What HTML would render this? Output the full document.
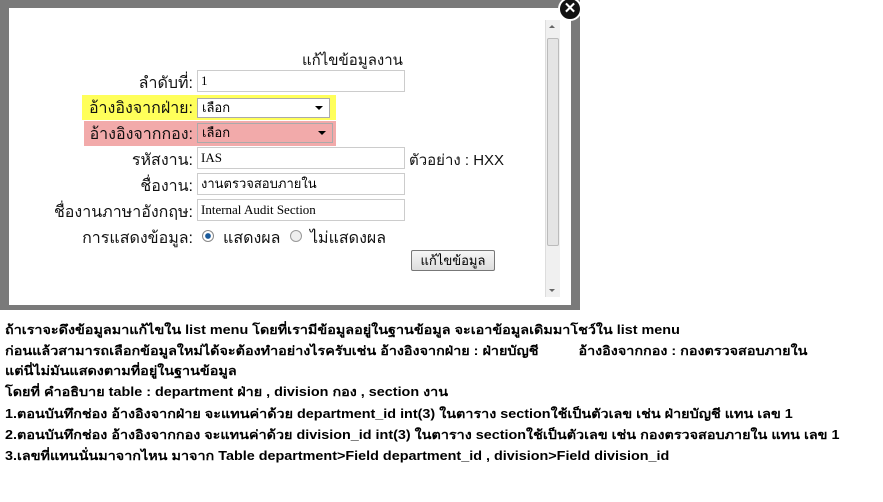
<!DOCTYPE html>
<html><head><meta charset="utf-8"><style>
body{margin:0;width:883px;height:502px;background:#fff;position:relative;overflow:hidden;font-family:"Liberation Sans",sans-serif;}
.ov{position:absolute;left:0;top:0;width:580px;height:310px;background:#7a7a7a;}
.box{position:absolute;left:9px;top:8px;width:562px;height:297px;background:#fff;}
.sb{position:absolute;left:545px;top:20px;width:14px;height:277px;background:#f0f0f0;border-left:1px solid #ddd;}
.thumb{position:absolute;left:1px;top:18px;width:12px;height:208px;background:#e4e4e4;border:1px solid #bbb;border-radius:2px;box-sizing:border-box;}
.a{position:absolute;font-size:15px;color:#111;white-space:nowrap;}
.lbl{position:absolute;right:690px;font-size:16px;color:#111;white-space:nowrap;}
.in{position:absolute;left:197px;width:208px;height:22px;border:1px solid #ccc;box-sizing:border-box;font-family:"Liberation Serif",serif;font-size:13px;padding:2px 3px;line-height:16px;background:#fff;}
.sel{position:absolute;left:197px;height:20px;border:1px solid #aaa;box-sizing:border-box;font-size:13px;padding:0 4px;line-height:17px;}
.arr{position:absolute;right:6px;top:7px;border-left:4px solid transparent;border-right:4px solid transparent;border-top:4px solid #000;}
.t{position:absolute;left:5px;font-size:12.5px;font-weight:bold;color:#000;white-space:nowrap;transform:scaleX(1.15);transform-origin:0 0;}
</style></head><body>
<div class="ov"></div>
<div class="box"></div>
<div class="sb"><div style="position:absolute;left:3px;top:5px;border-left:3px solid transparent;border-right:3px solid transparent;border-bottom:3px solid #666"></div><div class="thumb"></div><div style="position:absolute;left:3px;bottom:5px;border-left:3px solid transparent;border-right:3px solid transparent;border-top:3px solid #666"></div></div>
<div style="position:absolute;left:558px;top:-3px;width:20px;height:20px;border-radius:50%;background:#111;border:2px solid #fff;color:#fff;font-weight:bold;font-size:15px;text-align:center;line-height:19px;">✕</div>
<div class="a" style="left:302px;top:48px">แก้ไขข้อมูลงาน</div>
<div class="lbl" style="top:71px">ลำดับที่:</div>
<div class="in" style="top:70px">1</div>
<div style="position:absolute;left:82px;top:95px;width:254px;height:25px;background:#ffff5a"></div>
<div class="lbl" style="top:96px">อ้างอิงจากฝ่าย:</div>
<div class="sel" style="top:98px;width:133px;background:#fff">เลือก<span class="arr"></span></div>
<div style="position:absolute;left:84px;top:121px;width:252px;height:25px;background:#f2aaaa"></div>
<div class="lbl" style="top:122px">อ้างอิงจากกอง:</div>
<div class="sel" style="top:123px;width:136px;background:#f2aaaa">เลือก<span class="arr"></span></div>
<div class="lbl" style="top:148px">รหัสงาน:</div>
<div class="in" style="top:147px">IAS</div>
<div class="a" style="left:409px;top:148px">ตัวอย่าง : HXX</div>
<div class="lbl" style="top:174px">ชื่องาน:</div>
<div class="in" style="top:173px">งานตรวจสอบภายใน</div>
<div class="lbl" style="top:200px">ชื่องานภาษาอังกฤษ:</div>
<div class="in" style="top:199px">Internal Audit Section</div>
<div class="lbl" style="top:226px">การแสดงข้อมูล:</div>
<div style="position:absolute;left:202px;top:230px;width:10px;height:10px;border-radius:50%;border:1px solid #888;background:radial-gradient(#1a5a9a 35%,#fff 45%)"></div>
<div class="a" style="left:223px;top:226px;font-size:16px">แสดงผล</div>
<div style="position:absolute;left:290px;top:230px;width:10px;height:10px;border-radius:50%;border:1px solid #999;background:#eee"></div>
<div class="a" style="left:310px;top:226px;font-size:16px">ไม่แสดงผล</div>
<div style="position:absolute;left:411px;top:250px;width:84px;height:21px;border:1px solid #777;border-radius:2px;background:linear-gradient(#f6f6f6,#ddd);box-sizing:border-box;font-size:13px;text-align:center;line-height:19px">แก้ไขข้อมูล</div>
<div class="t" style="top:320px">ถ้าเราจะดึงข้อมูลมาแก้ไขใน list menu โดยที่เรามีข้อมูลอยู่ในฐานข้อมูล จะเอาข้อมูลเดิมมาโชว์ใน list menu</div>
<div class="t" style="top:341px">ก่อนแล้วสามารถเลือกข้อมูลใหม่ได้จะต้องทำอย่างไรครับเช่น อ้างอิงจากฝ่าย : ฝ่ายบัญชี&nbsp;&nbsp;&nbsp;&nbsp;&nbsp;&nbsp;&nbsp;&nbsp;&nbsp;&nbsp;อ้างอิงจากกอง : กองตรวจสอบภายใน</div>
<div class="t" style="top:361px">แต่นี่ไม่มันแสดงตามที่อยู่ในฐานข้อมูล</div>
<div class="t" style="top:382px">โดยที่ คำอธิบาย table : department ฝ่าย , division กอง , section งาน</div>
<div class="t" style="top:404px">1.ตอนบันทึกช่อง อ้างอิงจากฝ่าย จะแทนค่าด้วย department_id int(3) ในตาราง sectionใช้เป็นตัวเลข เช่น ฝ่ายบัญชี แทน เลข 1</div>
<div class="t" style="top:425px">2.ตอนบันทึกช่อง อ้างอิงจากกอง จะแทนค่าด้วย division_id int(3) ในตาราง sectionใช้เป็นตัวเลข เช่น กองตรวจสอบภายใน แทน เลข 1</div>
<div class="t" style="top:446px">3.เลขที่แทนนั่นมาจากไหน มาจาก Table department&gt;Field department_id , division&gt;Field division_id</div>
</body></html>
